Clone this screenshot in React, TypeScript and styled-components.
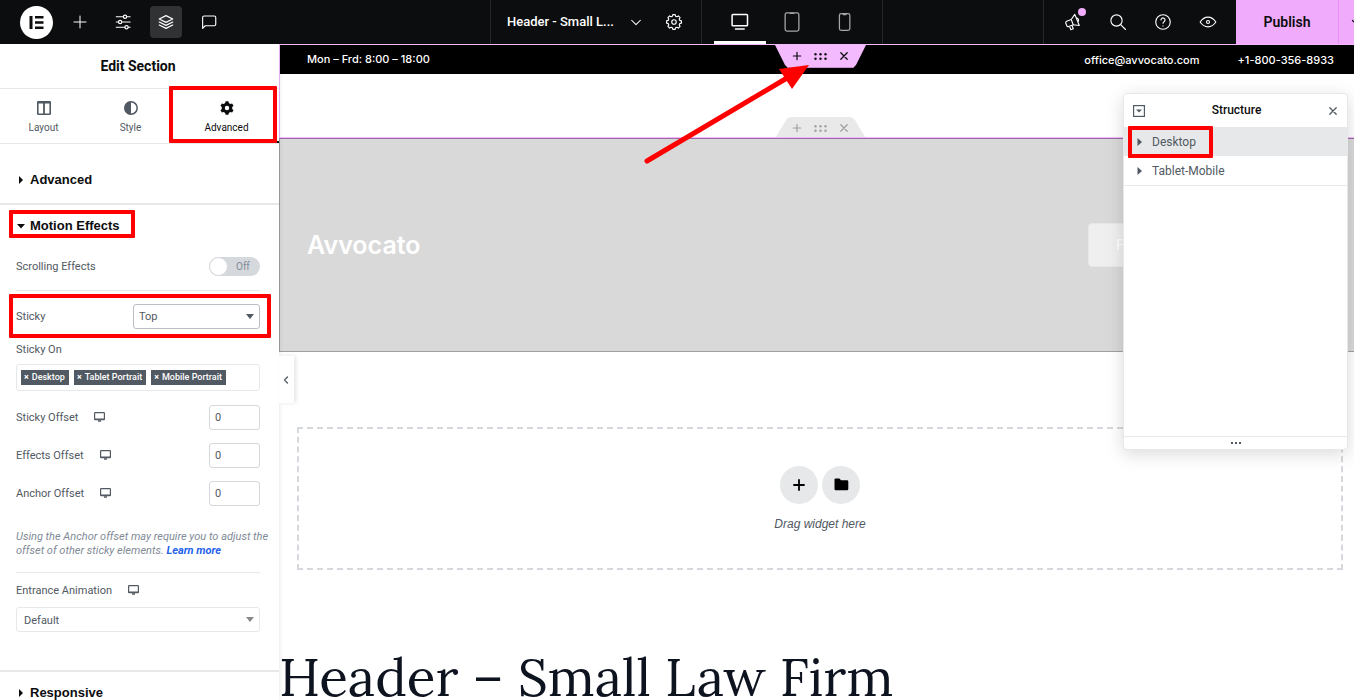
import React from "react";
import styled, { createGlobalStyle, css } from "styled-components";

const ink = "#0c0d0e";
const slate = "#515962";
const line = "#e6e8ea";
const field = "#d5d8dc";
const pink = "#f0abfc";
const red = "#ff0000";

const GlobalStyle = createGlobalStyle`
  *, *::before, *::after { box-sizing: border-box; }
  body {
    margin: 0;
    overflow: hidden;
    background: #fff;
    color: ${slate};
    font: 11px/16px Roboto, sans-serif;
  }
  button, input, select { font: inherit; color: inherit; }
  button { margin: 0; padding: 0; border: 0; background: none; cursor: pointer; }
  svg { display: block; flex: none; }
`;

const Page = styled.div`
  display: flex;
  flex-direction: column;
  height: 100vh;
  overflow: hidden;
`;

/* ---------- top bar ---------- */

const TopBar = styled.header`
  flex: none;
  background: ${ink};
  color: #fff;
  overflow: hidden;
`;

const TopGrid = styled.div`
  display: grid;
  grid-template-columns: minmax(0, 1fr) auto minmax(0, 1fr);
  height: 44px;
  margin-right: -19px;
`;

const Tools = styled.nav`
  display: flex;
  align-items: center;
  gap: 11px;
  padding-left: 20px;
`;

const Logo = styled.button`
  width: 33px;
  height: 33px;
  border-radius: 50%;
  background: #fff;
  display: grid;
  place-items: center;
`;

const ToolButton = styled.button<{ $active?: boolean }>`
  width: 32px;
  height: 32px;
  border-radius: 4px;
  display: grid;
  place-items: center;
  position: relative;
  background: ${(p) => (p.$active ? "#313234" : "transparent")};
`;

const Middle = styled.div`
  display: flex;
  border: solid #26282a;
  border-width: 0 1px;
`;

const DocumentGroup = styled.div`
  display: flex;
  align-items: center;
  width: 211px;
  padding-left: 16px;
  border-right: 1px solid #26282a;
`;

const DocumentButton = styled.button`
  display: flex;
  align-items: center;
  gap: 15px;
  margin-right: 15px;
  font-size: 13px;
  font-weight: 500;
  white-space: nowrap;
`;

const Devices = styled.div`
  display: flex;
  padding: 0 12px;
`;

const DeviceButton = styled.button<{ $active?: boolean }>`
  width: 52px;
  display: grid;
  place-items: center;
  border: solid transparent;
  border-width: 3px 0;
  color: ${(p) => (p.$active ? "#fff" : "#a4a7aa")};
  border-bottom-color: ${(p) => (p.$active ? "#fff" : "transparent")};
`;

const Actions = styled.div`
  display: flex;
  justify-content: flex-end;
`;

const ActionGroup = styled.div`
  display: flex;
  align-items: center;
  gap: 13px;
  padding: 0 12px 0 13px;
  border-left: 1px solid #26282a;
`;

const NewsDot = styled.span`
  position: absolute;
  top: 2px;
  right: 3px;
  width: 8px;
  height: 8px;
  border-radius: 50%;
  background: ${pink};
`;

const Publish = styled.button`
  width: 103px;
  background: ${pink};
  color: ${ink};
  font-size: 14px;
  font-weight: 600;
  border-right: 1px solid #eb8efb;
`;

const PublishMore = styled.button`
  width: 34px;
  background: ${pink};
  color: ${ink};
  display: grid;
  place-items: center;
`;

/* ---------- side panel ---------- */

const Body = styled.div`
  display: flex;
  flex: 1;
  min-height: 0;
`;

const Sidebar = styled.aside`
  flex: none;
  width: 279px;
  background: #fff;
  position: relative;
  z-index: 2;
  box-shadow: 0 0 5px rgba(0, 0, 0, 0.12);
`;

const PanelTitle = styled.h1`
  margin: 0;
  padding-right: 3px;
  height: 45px;
  border-bottom: 1px solid ${line};
  color: ${ink};
  font-size: 14px;
  line-height: 44px;
  font-weight: 700;
  text-align: center;
`;

const Tabs = styled.div`
  display: flex;
  height: 55px;
  border-bottom: 1px solid ${line};
`;

const Tab = styled.button<{ $active?: boolean }>`
  flex: ${(p) => (p.$active ? "1 1 18px" : "1 1 0")};
  display: flex;
  flex-direction: column;
  align-items: center;
  justify-content: center;
  gap: 5px;
  padding-top: 6px;
  position: relative;
  font-size: 10px;
  color: ${(p) => (p.$active ? ink : slate)};
  border-bottom: 2px solid ${(p) => (p.$active ? ink : "transparent")};
`;

const Callout = styled.span<{ $inset: string }>`
  position: absolute;
  inset: ${(p) => p.$inset};
  border: 4px solid ${red};
  border-radius: 1px;
  pointer-events: none;
`;

const Section = styled.section`
  border-bottom: 2px solid ${line};
`;

const SectionToggle = styled.button<{ $roomy?: boolean }>`
  display: flex;
  align-items: center;
  gap: 4px;
  position: relative;
  width: 100%;
  height: ${(p) => (p.$roomy ? 59 : 42)}px;
  padding: ${(p) => (p.$roomy ? 13 : 0)}px 16px 0;
  color: ${ink};
  font: 700 13px/16px "Liberation Sans", Arial, sans-serif;
`;

const Controls = styled.div`
  display: flex;
  flex-direction: column;
  padding: 0 19px 38px 16px;
`;

const Field = styled.div<{ $height: number; $ruled?: boolean; $lift?: number }>`
  display: flex;
  align-items: center;
  justify-content: space-between;
  position: relative;
  height: ${(p) => p.$height}px;
  padding-bottom: ${(p) => p.$lift ?? 0}px;
  border-top: ${(p) => (p.$ruled ? `1px solid ${line}` : "0")};
`;

const Label = styled.label`
  display: flex;
  align-items: center;
  gap: 16px;
  padding-top: 2px;
  svg { margin-bottom: 2px; }
`;

const Switch = styled.label`
  position: relative;
  width: 51px;
  height: 19px;
  border-radius: 10px;
  background: ${field};
  color: #818a96;
  font-size: 10px;
  line-height: 19px;
  padding-left: 27px;
`;

const SwitchInput = styled.input`
  appearance: none;
  position: absolute;
  left: 0;
  top: 0;
  width: 19px;
  height: 19px;
  margin: 0;
  border: 1px solid ${field};
  border-radius: 50%;
  background: #fff;
`;

const SelectBox = styled.div<{ $wide?: boolean }>`
  position: relative;
  width: ${(p) => (p.$wide ? "100%" : "127px")};
  color: ${(p) => (p.$wide ? "#888" : slate)};
  svg {
    position: absolute;
    right: 6px;
    top: 10px;
    pointer-events: none;
  }
`;

const Select = styled.select<{ $soft?: boolean }>`
  appearance: none;
  width: 100%;
  height: 25px;
  padding: ${(p) => (p.$soft ? "2px 7px 0" : "1px 5px 0")};
  border: 1px solid ${(p) => (p.$soft ? line : "#babfc5")};
  border-radius: 3px;
  background: #fff;
  color: ${slate};
`;

const Tags = styled.div`
  display: flex;
  align-items: center;
  gap: 5px;
  height: 27px;
  margin-bottom: 7px;
  padding: 0 4px;
  border: 1px solid ${line};
  border-radius: 3px;
`;

const Tag = styled.button`
  height: 15px;
  padding: 0 4px 0 3px;
  background: ${slate};
  color: #fff;
  font-size: 9px;
  font-weight: 500;
  line-height: 15px;
  white-space: nowrap;
  b { margin-right: 3px; }
`;

const NumberInput = styled.input`
  width: 51px;
  height: 25px;
  padding: 0 5px;
  border: 1px solid ${field};
  border-radius: 3px;
  background: #fff;
`;

const Hint = styled.p`
  margin: 18px 0 14px;
  color: #818a96;
  font-size: 11px;
  line-height: 14px;
  font-style: italic;
  white-space: nowrap;
  a { color: #2563eb; font-weight: 700; text-decoration: none; }
`;

const Collapse = styled.button`
  position: absolute;
  left: 100%;
  top: 312px;
  width: 15px;
  height: 47px;
  padding: 0 2px 0 0;
  display: grid;
  place-items: center;
  background: #fff;
  box-shadow: 2px 0 4px rgba(0, 0, 0, 0.1);
`;

/* ---------- canvas ---------- */

const Canvas = styled.main`
  flex: 1;
  min-width: 0;
  margin-right: -8px;
  position: relative;
  background: #fff;
`;

const HeaderArea = styled.section`
  position: relative;
  height: 94px;
  border: solid #f3bafd;
  border-width: 1px 0 1px 1px;
`;

const ContactBar = styled.div`
  display: flex;
  gap: 38px;
  height: 29px;
  padding: 0 28px 0 27px;
  background: #000;
  color: #fff;
  font: 500 11px/29px Inter, sans-serif;
  a { color: inherit; text-decoration: none; line-height: 31px; }
`;

const Hours = styled.span`
  flex: 1;
`;

const HandleRow = styled.div<{ $edge: "top" | "bottom" }>`
  position: absolute;
  left: -1px;
  right: 0;
  ${(p) => p.$edge}: 0;
  z-index: 1;
  display: flex;
  justify-content: center;
`;

const HandleWrap = styled.div`
  position: relative;
`;

const Handle = styled.div<{ $muted?: boolean }>`
  display: flex;
  align-items: center;
  justify-content: center;
  gap: 11px;
  ${(p) =>
    p.$muted
      ? css`
          width: 89px;
          height: 20px;
          background: #e9e9e9;
          color: #a0a0a0;
          padding-top: 2px;
          clip-path: polygon(0 100%, 10px 3px, 12px 1px, 15px 0, 74px 0, 77px 1px, 79px 3px, 100% 100%);
        `
      : css`
          width: 91px;
          height: 23px;
          background: #f3bafd;
          color: ${ink};
          border-bottom: 1px solid #c78fd1;
          clip-path: polygon(0 0, 100% 0, 81px 20px, 78px 100%, 13px 100%, 10px 20px);
        `}
`;

const HandleButton = styled.button`
  display: grid;
  place-items: center;
`;

const Arrow = styled.svg`
  position: absolute;
  left: -133px;
  top: 17px;
  pointer-events: none;
`;

const Banner = styled.section`
  display: flex;
  align-items: center;
  justify-content: space-between;
  height: 214px;
  padding: 0 28px 0 27px;
  background: #d9d9d9;
  border: solid #9f9f9f;
  border-width: 1px 0 1px 1px;
  border-top-color: #9c6ba5;
`;

const Brand = styled.a`
  color: #fff;
  text-decoration: none;
  font: 600 25px/32px Inter, sans-serif;
`;

const BannerButton = styled.button`
  width: 246px;
  height: 44px;
  padding: 0 27px;
  border: 1px solid #e8e8e8;
  border-radius: 4px;
  background: #efefef;
  color: #fff;
  text-align: left;
  font: 500 14px/20px Inter, sans-serif;
`;

const DropZone = styled.section`
  display: flex;
  flex-direction: column;
  align-items: center;
  justify-content: center;
  gap: 12px;
  height: 143px;
  margin: 75px 19px 0 18px;
  border: 2px dashed ${field};
  font: italic 12px/16px "Liberation Sans", Arial, sans-serif;
`;

const DropButtons = styled.div`
  display: flex;
  gap: 4px;
`;

const RoundButton = styled.button`
  width: 38px;
  height: 38px;
  border-radius: 50%;
  background: ${line};
  color: #000;
  display: grid;
  place-items: center;
`;

const PageHeading = styled.h2`
  margin: 75px 0 0;
  color: #0d131f;
  font: 400 53px/64px Lora, "Liberation Serif", serif;
  white-space: nowrap;
`;

/* ---------- structure window ---------- */

const Structure = styled.aside`
  position: absolute;
  z-index: 3;
  top: 49px;
  right: 14px;
  width: 225px;
  height: 357px;
  display: flex;
  flex-direction: column;
  background: #fff;
  border: 1px solid ${line};
  border-radius: 4px;
  box-shadow: 0 4px 18px rgba(0, 0, 0, 0.15);
  font-size: 12px;
`;

const StructureHead = styled.div`
  display: flex;
  align-items: center;
  justify-content: space-between;
  height: 33px;
  padding: 0 9px;
  color: ${slate};
`;

const StructureTitle = styled.h3`
  margin: 0;
  padding-bottom: 2px;
  color: ${ink};
  font-size: 12px;
  font-weight: 500;
`;

const TreeItem = styled.button<{ $selected?: boolean }>`
  display: flex;
  align-items: center;
  gap: 10px;
  position: relative;
  z-index: ${(p) => (p.$selected ? 1 : 0)};
  height: 29px;
  padding-left: 13px;
  background: ${(p) => (p.$selected ? line : "#fff")};
`;

const Tree = styled.div`
  flex: 1;
  display: flex;
  flex-direction: column;
`;

const TreeEnd = styled.div`
  border-top: 1px solid ${line};
`;

const Grip = styled.div`
  display: grid;
  place-items: center;
  height: 13px;
  border-top: 1px solid ${line};
  color: ${slate};
`;

/* ---------- icons ---------- */

type IconProps = { size?: number; width?: number; children: React.ReactNode; box?: number };

const Icon = ({ size = 16, width = 1.5, box = 24, children }: IconProps) => (
  <svg
    width={size}
    height={size}
    viewBox={`0 0 ${box} ${box}`}
    fill="none"
    stroke="currentColor"
    strokeWidth={width}
    strokeLinecap="round"
    strokeLinejoin="round"
    aria-hidden="true"
  >
    {children}
  </svg>
);

const Caret = ({ dir }: { dir: "right" | "down" }) => (
  <svg width="10" height="8" viewBox="0 0 10 8" fill="currentColor" aria-hidden="true">
    <path d={dir === "right" ? "M3 0L7 4L3 8Z" : "M1 2H9L5 6.500Z"} />
  </svg>
);

const SelectCaret = () => (
  <svg width="8" height="5" viewBox="0 0 8 5" fill="currentColor" aria-hidden="true">
    <path d="M0 0h8L4 5z" />
  </svg>
);

const TreeCaret = () => (
  <svg width="5" height="8" viewBox="0 0 5 8" fill="currentColor" aria-hidden="true">
    <path d="M0.500 0v8L5 4z" />
  </svg>
);

const MonitorIcon = () => (
  <svg width="11" height="10" viewBox="0 0 11 10" fill="none" stroke="currentColor" aria-hidden="true">
    <rect x="0.600" y="0.600" width="9.800" height="7" rx="0.600" strokeWidth="1.200" />
    <path d="M0.500 7.300h10M4 9h3" strokeWidth="1.500" />
  </svg>
);

const gearPath = (teeth: number, outer: number, inner: number) => {
  const points: string[] = [];
  const step = (Math.PI * 2) / teeth;
  for (let i = 0; i < teeth; i++) {
    [
      [-0.34, inner],
      [-0.2, outer],
      [0.2, outer],
      [0.34, inner],
    ].forEach(([offset, radius]) => {
      const angle = (i + offset) * step - Math.PI / 2;
      points.push(`${(12 + radius * Math.cos(angle)).toFixed(2)} ${(12 + radius * Math.sin(angle)).toFixed(2)}`);
    });
  }
  return `M${points.join("L")}Z`;
};

const HandleIcons = () => (
  <>
    <HandleButton aria-label="Add section">
      <Icon size={12} box={12} width={1.2}><path d="M6 2.300v7.400M2.300 6h7.400" /></Icon>
    </HandleButton>
    <HandleButton aria-label="Edit section">
      <svg width="13" height="7" viewBox="0 0 13 7" fill="currentColor" aria-hidden="true">
        {[1.5, 6.5, 11.5].map((x) => (
          <React.Fragment key={x}>
            <circle cx={x} cy="1.200" r="1.200" />
            <circle cx={x} cy="5.800" r="1.200" />
          </React.Fragment>
        ))}
      </svg>
    </HandleButton>
    <HandleButton aria-label="Delete section">
      <Icon size={12} box={12} width={1.3}><path d="M2.800 2.800l6.400 6.400M9.200 2.800L2.800 9.200" /></Icon>
    </HandleButton>
  </>
);

const offsets = [
  { id: "sticky-offset", label: "Sticky Offset" },
  { id: "effects-offset", label: "Effects Offset" },
  { id: "anchor-offset", label: "Anchor Offset" },
];

export default function App() {
  return (
    <Page>
      <GlobalStyle />
      <TopBar>
        <TopGrid>
          <Tools>
            <Logo aria-label="Elementor menu">
              <svg width="15" height="15" viewBox="0 0 15 15" fill={ink} aria-hidden="true">
                <path d="M0.500 1h3v13h-3zM6 1h8.500v2.600H6zM6 6.200h8.500v2.600H6zM6 11.400h8.500V14H6z" />
              </svg>
            </Logo>
            <ToolButton aria-label="Add element">
              <Icon><path d="M12 3v18M3 12h18" /></Icon>
            </ToolButton>
            <ToolButton aria-label="Site settings">
              <Icon size={18}>
                <path d="M3 5h9.500M17 5h4.500M3 12h3M10.500 12h11M3 19h11.500M19 19h2.500" />
                <circle cx="14.700" cy="5" r="2.200" />
                <circle cx="8.200" cy="12" r="2.200" />
                <circle cx="16.700" cy="19" r="2.200" />
              </Icon>
            </ToolButton>
            <ToolButton $active aria-label="Structure">
              <Icon size={18}>
                <path d="M12 3.500L3 8l9 4.500L21 8z" />
                <path d="M3 12l9 4.500 9-4.500M3 16l9 4.500 9-4.500" />
              </Icon>
            </ToolButton>
            <ToolButton aria-label="Notes">
              <Icon size={18}>
                <path d="M3.500 20.500V6A2 2 0 0 1 5.500 4h13.500a2 2 0 0 1 2 2v9a2 2 0 0 1-2 2H7z" />
              </Icon>
            </ToolButton>
          </Tools>

          <Middle>
            <DocumentGroup>
              <DocumentButton>
                Header - Small L...
                <Icon size={14} width={1.8}><path d="M4.500 9l7.500 7.500L19.500 9" /></Icon>
              </DocumentButton>
              <ToolButton aria-label="Document settings">
                <Icon size={18}>
                  <path d={gearPath(8, 10, 8)} />
                  <circle cx="12" cy="12" r="3" />
                </Icon>
              </ToolButton>
            </DocumentGroup>
            <Devices>
              <DeviceButton $active aria-label="Desktop">
                <Icon size={20} width={1.8}>
                  <rect x="2.500" y="3" width="18.500" height="13.500" rx="1" />
                  <path d="M6.500 20.500h10.500" />
                </Icon>
              </DeviceButton>
              <DeviceButton aria-label="Tablet portrait">
                <Icon size={22} width={1.4}>
                  <rect x="4.500" y="2" width="15" height="20" rx="2" />
                  <path d="M10 2.500h4" />
                </Icon>
              </DeviceButton>
              <DeviceButton aria-label="Mobile portrait">
                <Icon size={20} width={1.5}>
                  <rect x="6.500" y="2" width="12.500" height="20" rx="2.200" />
                  <path d="M11 3h3.500" />
                </Icon>
              </DeviceButton>
            </Devices>
          </Middle>

          <Actions>
            <ActionGroup>
              <ToolButton aria-label="What's new">
                <Icon size={18}>
                  <g transform="rotate(-22 12 12)">
                    <path d="M11 8L18 3.500v16L11 15.500H4.500a2 2 0 0 1-2-2V10a2 2 0 0 1 2-2zM11 8v7.500M5.500 15.500v5h3.500v-5M18.500 9a2.800 2.800 0 0 1 0 5" />
                  </g>
                </Icon>
                <NewsDot />
              </ToolButton>
              <ToolButton aria-label="Finder">
                <Icon size={18}><circle cx="10" cy="10" r="7.500" /><path d="M15.500 15.500L22 22" /></Icon>
              </ToolButton>
              <ToolButton aria-label="Help">
                <Icon size={18}>
                  <circle cx="12" cy="12" r="9.700" />
                  <path d="M9.300 9.200a2.700 2.700 0 1 1 4.400 2.200c-1 .8-1.700 1.300-1.700 2.300M12 17v.2" />
                </Icon>
              </ToolButton>
              <ToolButton aria-label="Preview">
                <Icon size={18}>
                  <path d="M1.500 12C4.500 7.500 8 5.500 12 5.500s7.500 2 10.500 6.500c-3 4.500-6.500 6.500-10.500 6.500S4.500 16.500 1.500 12z" />
                  <circle cx="12" cy="12" r="2" />
                </Icon>
              </ToolButton>
            </ActionGroup>
            <Publish>Publish</Publish>
            <PublishMore aria-label="Save options">
              <Icon size={12} width={2.4}><path d="M5 9l7 7 7-7" /></Icon>
            </PublishMore>
          </Actions>
        </TopGrid>
      </TopBar>

      <Body>
        <Sidebar>
          <PanelTitle>Edit Section</PanelTitle>
          <Tabs role="tablist">
            <Tab role="tab" aria-selected="false">
              <svg width="14" height="14" viewBox="0 0 14 14" fill="none" stroke="currentColor" aria-hidden="true">
                <rect x="0.800" y="0.800" width="12.400" height="12.400" strokeWidth="1.600" rx="0.500" />
                <path d="M0.500 1.600h13M7 1v12.500" strokeWidth="1.800" />
              </svg>
              Layout
            </Tab>
            <Tab role="tab" aria-selected="false">
              <svg width="14" height="14" viewBox="0 0 14 14" aria-hidden="true">
                <circle cx="7" cy="7" r="6.200" fill="none" stroke="currentColor" strokeWidth="1.500" />
                <path d="M7 0.500a6.500 6.500 0 0 0 0 13z" fill="currentColor" />
              </svg>
              Style
            </Tab>
            <Tab role="tab" aria-selected="true" $active>
              <svg width="14" height="14" viewBox="1 1 22 22" fill="currentColor" fillRule="evenodd" aria-hidden="true">
                <path d={`${gearPath(6, 10.8, 8.3)}M12 8.500a3.500 3.500 0 1 0 0 7a3.500 3.500 0 1 0 0-7z`} />
              </svg>
              Advanced
              <Callout $inset="-3px 2px -2px -5px" />
            </Tab>
          </Tabs>

          <Section>
            <SectionToggle $roomy>
              <Caret dir="right" />
              Advanced
            </SectionToggle>
          </Section>

          <Section>
            <SectionToggle aria-expanded="true">
              <Caret dir="down" />
              Motion Effects
              <Callout $inset="5px 144px 9px 9px" />
            </SectionToggle>
            <Controls>
              <Field $height={43} $lift={5}>
                <Label htmlFor="scrolling">Scrolling Effects</Label>
                <Switch>
                  <SwitchInput type="checkbox" id="scrolling" />
                  Off
                </Switch>
              </Field>
              <Field $height={51} $ruled>
                <Label htmlFor="sticky">Sticky</Label>
                <SelectBox>
                  <Select id="sticky"><option>Top</option></Select>
                  <SelectCaret />
                </SelectBox>
                <Callout $inset="3px -11px 3px -7px" />
              </Field>
              <Field $height={23} $lift={8}>
                <Label as="span">Sticky On</Label>
              </Field>
              <Tags>
                {["Desktop", "Tablet Portrait", "Mobile Portrait"].map((name) => (
                  <Tag key={name}><b>×</b>{name}</Tag>
                ))}
              </Tags>
              {offsets.map(({ id, label }) => (
                <Field $height={38} key={id}>
                  <Label htmlFor={id}>{label}<MonitorIcon /></Label>
                  <NumberInput id={id} defaultValue="0" />
                </Field>
              ))}
              <Hint>
                Using the Anchor offset may require you to adjust the
                <br />
                offset of other sticky elements. <a href="#learn">Learn more</a>
              </Hint>
              <Field $height={35} $ruled>
                <Label htmlFor="entrance">Entrance Animation<MonitorIcon /></Label>
              </Field>
              <SelectBox $wide>
                <Select $soft id="entrance"><option>Default</option></Select>
                <SelectCaret />
              </SelectBox>
            </Controls>
          </Section>

          <SectionToggle>
            <Caret dir="right" />
            Responsive
          </SectionToggle>

          <Collapse aria-label="Hide panel">
            <Icon size={10} box={10} width={1.3}><path d="M6.500 2L3.500 5l3 3" /></Icon>
          </Collapse>
        </Sidebar>

        <Canvas>
          <HeaderArea>
            <ContactBar>
              <Hours>Mon – Frd: 8:00 – 18:00</Hours>
              <a href="#mail">office@avvocato.com</a>
              <a href="#phone">+1-800-356-8933</a>
            </ContactBar>
            <HandleRow $edge="top">
              <HandleWrap>
                <Handle><HandleIcons /></Handle>
                <Arrow width="170" height="104" viewBox="0 0 170 104" aria-hidden="true">
                  <path d="M5 99L145 16" stroke={red} strokeWidth="5" strokeLinecap="round" />
                  <path d="M167 3L137 7l13 20z" fill={red} />
                </Arrow>
              </HandleWrap>
            </HandleRow>
            <HandleRow $edge="bottom">
              <Handle $muted><HandleIcons /></Handle>
            </HandleRow>
          </HeaderArea>

          <Banner>
            <Brand href="#home">Avvocato</Brand>
            <BannerButton>F</BannerButton>
          </Banner>

          <DropZone>
            <DropButtons>
              <RoundButton aria-label="Add widget">
                <Icon size={14} box={14} width={1.8}><path d="M7 2v10M2 7h10" /></Icon>
              </RoundButton>
              <RoundButton aria-label="Open library">
                <svg width="15" height="13" viewBox="0 0 15 13" fill="currentColor" aria-hidden="true">
                  <path d="M1.500 0.500h4l1.500 1.800h6a1.300 1.300 0 0 1 1.300 1.300v7.400a1.300 1.300 0 0 1-1.300 1.300H1.800A1.300 1.300 0 0 1 0.500 11V1.500a1 1 0 0 1 1-1z" />
                </svg>
              </RoundButton>
            </DropButtons>
            Drag widget here
          </DropZone>

          <PageHeading>Header – Small Law Firm</PageHeading>

          <Structure>
            <StructureHead>
              <button aria-label="Expand all">
                <svg width="12" height="12" viewBox="0 0 12 12" aria-hidden="true">
                  <rect x="0.600" y="0.600" width="10.800" height="10.800" fill="none" stroke="currentColor" strokeWidth="1.200" />
                  <path d="M3 4.500h6L6 7.500z" fill="currentColor" />
                </svg>
              </button>
              <StructureTitle>Structure</StructureTitle>
              <button aria-label="Close">
                <Icon size={10} box={10} width={1.3}><path d="M1.800 1.800l6.400 6.400M8.200 1.800L1.800 8.200" /></Icon>
              </button>
            </StructureHead>
            <Tree>
              <TreeItem $selected>
                <TreeCaret />
                Desktop
                <Callout $inset="-1px 134px -2px 4px" />
              </TreeItem>
              <TreeItem>
                <TreeCaret />
                Tablet-Mobile
              </TreeItem>
              <TreeEnd />
            </Tree>
            <Grip>
              <svg width="10" height="2" viewBox="0 0 10 2" fill="currentColor" aria-hidden="true">
                <path d="M0 0h2v2H0zM4 0h2v2H4zM8 0h2v2H8z" />
              </svg>
            </Grip>
          </Structure>
        </Canvas>
      </Body>
    </Page>
  );
}
